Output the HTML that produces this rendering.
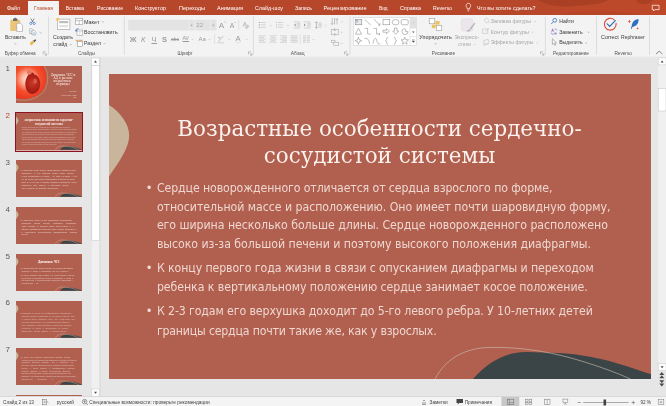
<!DOCTYPE html>
<html lang="ru"><head><meta charset="utf-8"><title>PowerPoint</title>
<style>
*{box-sizing:border-box;margin:0;padding:0}
html,body{width:666px;height:406px;overflow:hidden;background:#e6e6e6;font-family:"Liberation Sans",sans-serif}
#app{will-change:transform;position:relative;width:666px;height:406px;overflow:hidden;background:#e6e6e6}
.x{position:absolute;white-space:nowrap;line-height:7px;height:7px;font-family:"Liberation Sans",sans-serif}
svg{position:absolute;left:0;top:0;overflow:visible}
#tabs{position:absolute;left:0;top:0;width:666px;height:14.6px;background:#b7472a;overflow:hidden}
#tabs .act{position:absolute;background:#f3f3f3;top:1.2px;left:28px;width:31.3px;height:14px}
#ribbon{position:absolute;left:0;top:14.6px;width:666px;height:42px;background:#f3f3f3}
#ribline{position:absolute;left:0;top:56.2px;width:666px;height:1.4px;background:linear-gradient(#f0f0f0,#e8e8e8)}
#panel{position:absolute;left:0;top:57.6px;width:100px;height:339.4px;overflow:hidden}
.th{position:absolute;left:16.4px;width:65.5px;height:37px;background:#b15f4e;overflow:hidden}
.ts{position:absolute;left:0;top:0;width:542.7px;height:305px;transform:scale(0.12069);transform-origin:0 0}
.ts p{position:absolute;white-space:nowrap;color:#fff6f2;font-family:'DejaVu Sans',sans-serif}
.ts svg{position:absolute;left:0;top:0}
#slide{position:absolute;left:108.5px;top:73.8px;width:542.6px;height:305px;background:#b15f4e;overflow:hidden}
#slide .ttl{position:absolute;left:-0.3px;width:100%;text-align:center;font-family:"DejaVu Serif","Liberation Serif",serif;color:#fbf2ee;font-size:21.45px;line-height:27px;white-space:nowrap}
#slide .b{position:absolute;left:48.4px;transform:scaleY(1.05);transform-origin:0 10.8px;font-family:"DejaVu Sans","Liberation Sans",sans-serif;font-size:11px;letter-spacing:-0.1px;line-height:14px;color:#eed7d0;white-space:nowrap}
#slide .dot{position:absolute;left:37.3px;font-family:"DejaVu Sans","Liberation Sans",sans-serif;font-size:11.5px;line-height:14px;color:#f1dcd5}
#status{position:absolute;left:0;top:396px;width:666px;height:10px;background:#f4f4f4;border-top:0.8px solid #d9d9d9}
</style></head><body>
<div id="app">
<div id="tabs">
<svg width="666" height="15" viewBox="0 0 666 15">
<defs><linearGradient id="tg" x1="0" x2="1" y1="0" y2="0"><stop offset="0" stop-color="#c04a2a" stop-opacity="0"/><stop offset=".35" stop-color="#c04a2a" stop-opacity=".6"/><stop offset="1" stop-color="#c04a2a" stop-opacity=".7"/></linearGradient></defs><rect x="530" y="0" width="136" height="15" fill="url(#tg)"/><path d="M538 0 C545 5 560 7.500 575 6 C590 4.500 600 5 608 0Z" fill="#a63e23" opacity=".85"/><path d="M636 0 C639 5 648 6.500 653 0Z" fill="#a63e23" opacity=".8"/><path d="M560 15 C580 9 610 9 640 15Z" fill="#b34426" opacity=".6"/>
<g fill="none" stroke="#fff" stroke-width=".7">
<path d="M466.3 6.6a2.3 2.3 0 1 1 4.2 0c-.5.8-.9 1.3-.9 2.2h-2.4c0-.9-.4-1.4-.9-2.2z"/>
<path d="M467.4 10h2M467.7 11h1.4" stroke-width=".6"/>
<path d="M652.3 5.3h6.8v4.3h-4.2l-1.3 1.4v-1.4h-1.3z"/>
</g>
</svg>
<div class="act"></div>
</div>
<div id="ribbon"></div><div id="ribline"></div>
<svg id="ribsvg" width="666" height="60" viewBox="0 0 666 60">
<path d="M48.5 16.7V54.6" stroke="#d6d6d6" stroke-width=".8"/>
<path d="M124.3 16.7V54.6" stroke="#d6d6d6" stroke-width=".8"/>
<path d="M253.4 16.7V54.6" stroke="#d6d6d6" stroke-width=".8"/>
<path d="M350 16.7V54.6" stroke="#d6d6d6" stroke-width=".8"/>
<path d="M545.4 16.7V54.6" stroke="#d6d6d6" stroke-width=".8"/>
<path d="M596.5 16.7V54.6" stroke="#d6d6d6" stroke-width=".8"/>
<path d="M649.5 16.7V54.6" stroke="#d6d6d6" stroke-width=".8"/>
<path d="M238.6 20V30" stroke="#dadada" stroke-width=".7"/>
<path d="M214.6 34V44" stroke="#dadada" stroke-width=".7"/>
<path d="M300.3 34V44" stroke="#dadada" stroke-width=".7"/>
<path d="M43.2 54.4v-2.6h2.6M44.5 53.099999999999994l2 2M46.6 53.4v1.8h-1.8" fill="none" stroke="#8a8a8a" stroke-width=".5"/>
<path d="M248.5 54.4v-2.6h2.6M249.8 53.099999999999994l2 2M251.9 53.4v1.8h-1.8" fill="none" stroke="#8a8a8a" stroke-width=".5"/>
<path d="M344.5 54.4v-2.6h2.6M345.8 53.099999999999994l2 2M347.9 53.4v1.8h-1.8" fill="none" stroke="#8a8a8a" stroke-width=".5"/>
<path d="M540.5 54.4v-2.6h2.6M541.8 53.099999999999994l2 2M543.9 53.4v1.8h-1.8" fill="none" stroke="#8a8a8a" stroke-width=".5"/>
<path d="M14.40 43.30l0.9 0.9l0.9 -0.9" fill="none" stroke="#858585" stroke-width=".55"/>
<path d="M39.60 32.30l0.9 0.9l0.9 -0.9" fill="none" stroke="#858585" stroke-width=".55"/>
<path d="M69.90 44.20l0.9 0.9l0.9 -0.9" fill="none" stroke="#858585" stroke-width=".55"/>
<path d="M102.10 21.40l0.9 0.9l0.9 -0.9" fill="none" stroke="#858585" stroke-width=".55"/>
<path d="M103.60 43.10l0.9 0.9l0.9 -0.9" fill="none" stroke="#858585" stroke-width=".55"/>
<path d="M434.80 43.30l0.9 0.9l0.9 -0.9" fill="none" stroke="#858585" stroke-width=".55"/>
<path d="M587.70 31.70l0.9 0.9l0.9 -0.9" fill="none" stroke="#858585" stroke-width=".55"/>
<path d="M585.30 42.50l0.9 0.9l0.9 -0.9" fill="none" stroke="#858585" stroke-width=".55"/>
<path d="M190.60 25.00l0.9 0.9l0.9 -0.9" fill="none" stroke="#b8b8b8" stroke-width=".55"/>
<path d="M212.10 25.00l0.9 0.9l0.9 -0.9" fill="none" stroke="#b8b8b8" stroke-width=".55"/>
<path d="M191.50 38.90l0.9 0.9l0.9 -0.9" fill="none" stroke="#b8b8b8" stroke-width=".55"/>
<path d="M208.60 38.90l0.9 0.9l0.9 -0.9" fill="none" stroke="#b8b8b8" stroke-width=".55"/>
<path d="M228.60 38.90l0.9 0.9l0.9 -0.9" fill="none" stroke="#b8b8b8" stroke-width=".55"/>
<path d="M245.60 38.90l0.9 0.9l0.9 -0.9" fill="none" stroke="#b8b8b8" stroke-width=".55"/>
<path d="M269.90 25.00l0.9 0.9l0.9 -0.9" fill="none" stroke="#b8b8b8" stroke-width=".55"/>
<path d="M287.10 25.00l0.9 0.9l0.9 -0.9" fill="none" stroke="#b8b8b8" stroke-width=".55"/>
<path d="M324.70 25.00l0.9 0.9l0.9 -0.9" fill="none" stroke="#b8b8b8" stroke-width=".55"/>
<path d="M312.70 39.20l0.9 0.9l0.9 -0.9" fill="none" stroke="#b8b8b8" stroke-width=".55"/>
<path d="M340.90 21.30l0.9 0.9l0.9 -0.9" fill="none" stroke="#b8b8b8" stroke-width=".55"/>
<path d="M340.90 31.80l0.9 0.9l0.9 -0.9" fill="none" stroke="#b8b8b8" stroke-width=".55"/>
<path d="M340.90 43.10l0.9 0.9l0.9 -0.9" fill="none" stroke="#b8b8b8" stroke-width=".55"/>
<path d="M473.60 44.20l0.9 0.9l0.9 -0.9" fill="none" stroke="#b8b8b8" stroke-width=".55"/>
<path d="M534.00 21.20l0.9 0.9l0.9 -0.9" fill="none" stroke="#b8b8b8" stroke-width=".55"/>
<path d="M531.60 31.70l0.9 0.9l0.9 -0.9" fill="none" stroke="#b8b8b8" stroke-width=".55"/>
<path d="M536.40 42.50l0.9 0.9l0.9 -0.9" fill="none" stroke="#b8b8b8" stroke-width=".55"/>
<g><rect x="10.2" y="19.8" width="10" height="11.2" rx=".6" fill="#eac67c"/><rect x="13" y="18.4" width="4.4" height="2.6" rx=".5" fill="#6b6b6b"/><rect x="14.2" y="17.8" width="2" height="1.4" rx=".6" fill="#6b6b6b"/><path d="M16.7 23.3h3.8l2 2v6.2h-5.8z" fill="#fff" stroke="#8a8a8a" stroke-width=".5"/></g>
<g fill="none"><path d="M30.8 18.6l2.6 4M34.2 18.6l-2.6 4" stroke="#5a5a5a" stroke-width=".7"/><circle cx="30.8" cy="23.4" r="1.1" stroke="#3a78c3" stroke-width=".7"/><circle cx="34.2" cy="23.4" r="1.1" stroke="#3a78c3" stroke-width=".7"/></g>
<g fill="#fff" stroke="#8a8a8a" stroke-width=".5"><path d="M29.7 28.8h2.6l1.2 1.2v3.6h-3.8z"/><path d="M32 30.6h2.6l1.3 1.3v3h-3.9z"/><path d="M30.6 31h1.6M30.6 32.2h1.2M33 32.8h1.8M33 33.9h1.8" stroke="#4a86d0" stroke-width=".45"/></g>
<g><path d="M29.6 43.2l3-2.6 1.8 2-3 2.8z" fill="#e9b94e"/><path d="M33 40.8l2.4-1.6 .9 1-1.9 2z" fill="#555"/></g>
<g><rect x="57.5" y="19.1" width="12.4" height="10.3" fill="#fff" stroke="#9a9a9a" stroke-width=".6"/><rect x="59.2" y="21" width="9" height="2.2" fill="#bdbdbd"/><rect x="59.2" y="25" width="9" height="2.2" fill="#e2e2e2"/><path d="M57.6 17.200l.4 1.200 1.200-.5-.5 1.200 1.200.4-1.200.4.5 1.200-1.200-.5-.4 1.200-.4-1.200-1.200.5.5-1.200-1.200-.4 1.200-.4-.5-1.200 1.200.5z" fill="#f4c55c"/></g>
<g fill="none" stroke="#8a8a8a" stroke-width=".5"><rect x="75.6" y="18.7" width="7.2" height="5.8" fill="#fff"/><path d="M75.6 20.6h7.2M79.2 20.6v3.9"/></g>
<g fill="none"><rect x="77" y="30" width="5.8" height="5.2" fill="#fff" stroke="#8a8a8a" stroke-width=".5"/><path d="M77 31.6h5.8M79.8 31.6v3.6" stroke="#aaa" stroke-width=".4"/><path d="M76 31.2c-.4-1.6.8-2.8 2.6-2.4" stroke="#2f6fc0" stroke-width=".8"/><path d="M75 30.2l1 1.6 1.4-1.2z" fill="#2f6fc0"/></g>
<g><rect x="77.2" y="41.6" width="5.4" height="5" fill="#fff" stroke="#7a7a7a" stroke-width=".5"/><path d="M75.6 39.8h2.4v1.2h-2.4zM78.6 39.8h4v1.2h-4z" fill="#f0a868"/></g>
<rect x="128.2" y="19.8" width="66.4" height="10.8" rx=".8" fill="#e3e3e3"/>
<path d="M188.9 19.8v10.8" stroke="#f0f0f0" stroke-width=".6"/>
<rect x="195.3" y="19.8" width="21.2" height="10.8" rx=".8" fill="#e3e3e3"/>
<path d="M210.4 19.8v10.8" stroke="#f0f0f0" stroke-width=".6"/>
<path d="M190.500 24.800h2.200l-1.100 1.300zM212.200 24.800h2.200l-1.100 1.300z" fill="#8c8c8c"/>
<path d="M224.2 22.6l.9-.9.9.9" fill="none" stroke="#999" stroke-width=".5"/>
<path d="M234.4 22.2l.8.8.8-.8" fill="none" stroke="#999" stroke-width=".5"/>
<g fill="none" stroke="#a5a5a5" stroke-width=".6"><path d="M243 26.6l1.8-4.6 1.6 3.6M243.8 25h2.2"/><path d="M245.2 27.6l2.4-2.6 1.4 1.2-2.4 2.6z" fill="#cfcfcf" stroke-width=".4"/></g>
<g fill="none" stroke="#a5a5a5" stroke-width=".6"><path d="M218.4 41.6l5-5.6M217.8 37.4h2.4l-1.2 1.6"/><path d="M217.4 42.8h6.8" stroke="#d8c7dd" stroke-width=".9"/></g>
<path d="M235.4 42.6h5.6" stroke="#dedede" stroke-width=".7"/>
<g fill="#8f8f8f"><rect x="258.8" y="22" width="1" height="1"/><rect x="258.8" y="24.4" width="1" height="1"/><rect x="258.8" y="26.8" width="1" height="1"/></g>
<path d="M260.6 22.5h5.2M260.6 24.9h5.2M260.6 27.3h5.2" stroke="#bababa" stroke-width="0.55" fill="none"/>
<g fill="#c4c4c4"><rect x="276" y="21.8" width=".8" height="1.4"/><rect x="276" y="24.2" width=".8" height="1.4"/><rect x="276" y="26.6" width=".8" height="1.4"/></g>
<path d="M277.8 22.5h5.2M277.8 24.9h5.2M277.8 27.3h5.2" stroke="#bababa" stroke-width="0.55" fill="none"/>
<path d="M293.7 21.9h6.6" stroke="#bababa" stroke-width="0.55" fill="none"/>
<path d="M296.6 23.6h3.7M296.6 24.9h3.7M296.6 26.2h3.7" stroke="#bababa" stroke-width="0.55" fill="none"/>
<path d="M293.7 28.0h6.6" stroke="#bababa" stroke-width="0.55" fill="none"/>
<path d="M295.6 23.6l-1.6 1.4 1.6 1.4z" fill="#8f8f8f"/>
<path d="M303.8 21.9h7" stroke="#bababa" stroke-width="0.55" fill="none"/>
<path d="M307.0 23.6h3.8M307.0 24.9h3.8M307.0 26.2h3.8" stroke="#bababa" stroke-width="0.55" fill="none"/>
<path d="M303.8 28.0h7" stroke="#bababa" stroke-width="0.55" fill="none"/>
<path d="M304 23.6l1.6 1.4-1.6 1.4z" fill="#8f8f8f"/>
<path d="M316.4 21.8v6.4M315.2 23l1.2-1.3 1.2 1.3M315.2 27l1.2 1.3 1.2-1.3" fill="none" stroke="#8f8f8f" stroke-width=".55"/>
<path d="M318.4 23.0h3.4M318.4 24.4h3.4M318.4 25.7h3.4M318.4 27.1h3.4" stroke="#bababa" stroke-width="0.55" fill="none"/>
<path d="M258.8 35.8h7M258.8 37.4h5M258.8 39.0h7M258.8 40.6h5M258.8 42.2h7" stroke="#bababa" stroke-width="0.55" fill="none"/>
<path d="M269.6 35.8h7M270.8 37.4h4.6M269.6 39.0h7M270.8 40.6h4.6M269.6 42.2h7" stroke="#bababa" stroke-width="0.55" fill="none"/>
<path d="M280.0 35.8h7M282.0 37.4h5M280.0 39.0h7M282.0 40.6h5M280.0 42.2h7" stroke="#bababa" stroke-width="0.55" fill="none"/>
<path d="M290.6 35.8h7M290.6 37.4h7M290.6 39.0h7M290.6 40.6h7M290.6 42.2h7" stroke="#bababa" stroke-width="0.55" fill="none"/>
<path d="M303.0 35.8h3M303.0 37.4h3M303.0 39.0h3M303.0 40.6h3M303.0 42.2h3" stroke="#bababa" stroke-width="0.55" fill="none"/>
<path d="M306.9 35.8h3M306.9 37.4h3M306.9 39.0h3M306.9 40.6h3M306.9 42.2h3" stroke="#bababa" stroke-width="0.55" fill="none"/>
<path d="M332.2 18v6.4M334.6 18v6.4M337 19v5.4M335.8 20l1.2-1.6 1.2 1.6M331 23.2l1.2 1.4 1.2-1.4" fill="none" stroke="#8f8f8f" stroke-width=".5"/>
<g fill="none" stroke="#a0a0a0" stroke-width=".5"><rect x="331.2" y="29.4" width="7" height="5.4"/><path d="M334.7 28v2.8M333.8 30l.9 1 .9-1M334.7 36.2v-2.8M333.8 34.2l.9-1 .9 1"/></g>
<g fill="none" stroke="#a0a0a0" stroke-width=".5"><rect x="331.4" y="40.2" width="3.6" height="2.4"/><rect x="333.8" y="42.2" width="5" height="3.4" fill="#f3f3f3"/></g>
<rect x="353.4" y="17.4" width="63.1" height="28.2" fill="#fff" stroke="#d2d2d2" stroke-width=".6"/>
<rect x="410.2" y="17.7" width="6" height="10.2" fill="#e1e1e1"/>
<path d="M410 17.4v28.2M410 28h6.5M410 36.6h6.5" stroke="#d2d2d2" stroke-width=".5" fill="none"/>
<path d="M412.3 22.6h1.8" stroke="#bdbdbd" stroke-width=".5"/>
<path d="M412 31.6h2.6l-1.3 1.5z" fill="#555"/>
<path d="M412 40.9h2.6l-1.3 1.5zM412 39.8h2.6" fill="#555" stroke="#555" stroke-width=".4"/>
<g fill="none" stroke="#7c7c7c" stroke-width=".5"><rect x="355.2" y="19.4" width="6.6" height="5.4" fill="#e9e9e9"/><path d="M356.2 20.6h1.6M357 20.6v2" stroke="#2f6fc0"/><path d="M364.6 19.2l6.2 6"/><path d="M373.8 19.2l6.2 6M380 23.2v2h-2" /><rect x="383" y="19.6" width="6.8" height="5.2"/><ellipse cx="395.6" cy="22.2" rx="3.5" ry="2.7"/><rect x="401.2" y="19.6" width="7" height="5.2" rx="1.4"/><path d="M358.5 28.2l3 6h-6z"/><path d="M364.6 28.4h3v5.6h3.2"/><path d="M373.6 28.4h3v5.6h3.2M378.8 32.8l1.2 1.2-1.2 1.2"/><path d="M383 30.2h3.4v-1.6l3 2.6-3 2.6v-1.6H383z"/><path d="M394.4 28h2.6v3.2h1.6l-2.9 3-2.9-3h1.6z"/><path d="M404.6 28.6a3 3 0 1 0 3.4 3h-2.4v-2.4a3 3 0 0 0-1-.6z"/><path d="M358.4 37.2l.9 2.6 2.4.9-2.4.9-.9 2.8-.9-2.8-2.4-.9 2.4-.9z"/><path d="M364.4 38.4c3.4-.4 4.6 1.4 5.2 5.4"/><path d="M373 43.6c1.2-6.6 3.2-6.6 4-2.4.6 3.2 2 3 3.200 2.400"/><path d="M388.200 37.400c-1.500 0-1.500.6-1.500 1.600s-.3 1.500-1.200 1.800c.9.300 1.200.800 1.200 1.800s0 1.600 1.500 1.600"/><path d="M393.800 37.400c1.500 0 1.500.6 1.500 1.600s.3 1.500 1.200 1.800c-.9.300-1.200.800-1.200 1.800s0 1.600-1.500 1.600"/><path d="M404.800 37.200l1 2.500 2.700.2-2.100 1.700.7 2.600-2.300-1.400-2.300 1.400.7-2.600-2.100-1.700 2.700-.2z"/></g>
<g stroke-width=".5"><rect x="435.400" y="21" width="4.200" height="3.600" fill="#f0c25e"/><rect x="431.800" y="24.600" width="3.800" height="3.500" fill="#f0c25e"/><rect x="429.200" y="18.400" width="5.600" height="5.400" fill="#fff" stroke="#8a8a8a"/><rect x="436.200" y="25.300" width="5.600" height="5.400" fill="#fff" stroke="#8a8a8a"/></g>
<g><rect x="461.300" y="18.700" width="11.400" height="12.400" rx="1.800" fill="#ece6ec" stroke="#e0d8e0" stroke-width=".5"/><path d="M474.600 22.600l-5.200 6.200 1.400 1.200 4.600-6.600z" fill="#b9b9b9"/><path d="M469 29.400c-1.200.2-1.600 1.400-2.600 2 1.600.4 3.400 0 4-1z" fill="#b0b0b0"/></g>
<g fill="none" stroke="#bdbdbd" stroke-width=".55"><path d="M484 20l2.600-2.200 2.400 2.800-2.800 2.400zM488.800 21.400c.6.800.8 1.400.2 1.800"/><path d="M482.600 29h5.200v4.400h-5.200zM485.600 31.800l3.400-3.800"/><path d="M483.400 40.800l4.600-1.600 1 3.600-4.800 1.600zM483.200 44.400l.8.800 5-1.600"/></g>
<g fill="none" stroke="#356fc4" stroke-width=".8"><circle cx="554.800" cy="20.300" r="1.900"/><path d="M553.400 21.800l-2.300 2.300"/></g>
<g><path d="M551.800 30.400h1.600M552.600 28.800l1 3.400M552.600 28.800l-1 3.400" stroke="#8a4fb0" stroke-width=".5" fill="none"/><path d="M554.600 29.200c1.200-.4 2 .2 2.200 1.200M553.800 34.200c-1.600.2-2.600-.4-2.800-1.400" stroke="#356fc4" stroke-width=".6" fill="none"/><path d="M554.400 32.600h2.200v1.800h-2.200z" fill="#8a4fb0" opacity=".7"/></g>
<path d="M552.400 38.800v5.600l1.400-1.200 1 2.200.9-.4-1-2.200h1.800z" fill="#fff" stroke="#777" stroke-width=".5"/>
<g fill="none" stroke-linecap="round"><path d="M614.200 19.800a5.900 5.900 0 1 0 1.900 3.600" stroke="#dc452c" stroke-width="1.100"/><path d="M607.200 23.800l2.500 2.600 5.600-5.700" stroke="#2b6cb8" stroke-width="1.200"/></g>
<g><path d="M638.700 19.300c-3.600-.2-6.600 2.400-7 6.800l-.9 2.600.8.200.9-2c3.800-.4 6-3.400 6.200-7.600z" fill="#2f6fc0"/><path d="M629.400 19.600l.5 1.300 1.300.5-1.300.5-.5 1.300-.5-1.300-1.300-.5 1.300-.5z" fill="#dc452c"/><path d="M637.600 27l.4 1 1 .4-1 .4-.4 1-.4-1-1-.4 1-.4z" fill="#dc452c"/></g>
<path d="M656 54l3.200-2.800 3.200 2.800" fill="none" stroke="#555" stroke-width=".7"/>
</svg>
<div id="panel"></div>
<div class="th" style="top:66.2px;"><svg width="65.5" height="37" viewBox="0 0 65.3 36.8" preserveAspectRatio="none"><defs><radialGradient id="hg" cx="11.500" cy="13" r="20" gradientUnits="userSpaceOnUse"><stop offset="0" stop-color="#ffe9dd"/><stop offset=".3" stop-color="#fcb199"/><stop offset=".62" stop-color="#f4512f"/><stop offset="1" stop-color="#ea371e"/></radialGradient><radialGradient id="hh" cx="18" cy="17" r="9" gradientUnits="userSpaceOnUse"><stop offset="0" stop-color="#c93a28"/><stop offset=".7" stop-color="#b0241a"/><stop offset="1" stop-color="#a51d15"/></radialGradient><filter id="bl" x="-20%" y="-20%" width="140%" height="140%"><feGaussianBlur stdDeviation=".7"/></filter></defs><path d="M0 0H26.500 C31.200 6 31.200 16.500 26.600 23.800 C21.500 31.300 9 34.200 0 31.800Z" fill="url(#hg)"/><g filter="url(#bl)" transform="translate(-1.300 0)"><path d="M13.500 9 C15 5.500 18.500 5.500 19.500 8.500 C24 9.500 26.500 15 25 21 C23.500 27 18 29.500 14 26.500 C9.500 23 9.500 14 13.500 9Z" fill="url(#hh)"/><path d="M12.500 4.500 C14 3 16.500 3.500 17 6 C17.500 8 15 9.500 13.500 8.500 C12 7.500 11.500 5.500 12.500 4.500Z" fill="#e8785f"/><path d="M19 13 C21 12 23 14 22 16.500 C21 18.500 18.500 17.500 18.500 15.500Z" fill="#d95a44"/></g><path d="M28 0 C32.900 6.500 32.900 17 27.900 24.800 C22.500 32.800 9.500 35.800 0 33.300" fill="none" stroke="#dca97a" stroke-width=".5"/></svg><div class="ts"><p style="left:288.3px;top:62.8px;width:203.8px;font-size:22.39px;line-height:26.9px;opacity:0.95;font-weight:400;font-family:'DejaVu Serif',sans-serif;text-align:justify;text-align-last:justify;">Динамика ЧСС и</p><p style="left:311.5px;top:86.9px;width:157.4px;font-size:23.59px;line-height:28.3px;opacity:0.95;font-weight:400;font-family:'DejaVu Serif',sans-serif;text-align:justify;text-align-last:justify;">АД в разные</p><p style="left:311.5px;top:109.9px;width:157.4px;font-size:24px;line-height:28.8px;opacity:0.95;font-weight:400;font-family:'DejaVu Serif',sans-serif;text-align:justify;text-align-last:justify;">возрастные</p><p style="left:334.3px;top:134.7px;width:111.9px;font-size:24px;line-height:28.8px;opacity:0.95;font-weight:400;font-family:'DejaVu Serif',sans-serif;text-align:justify;text-align-last:justify;">периоды</p><p style="left:444.1px;top:210.0px;width:58.0px;font-size:9px;line-height:10.8px;opacity:0.75;font-weight:400;font-family:'DejaVu Sans',sans-serif;text-align:justify;text-align-last:justify;">Выполнили:</p><p style="left:377.8px;top:236.9px;width:124.3px;font-size:8.33px;line-height:10.0px;opacity:0.75;font-weight:400;font-family:'DejaVu Sans',sans-serif;text-align:justify;text-align-last:justify;">студенты 2 курса, 4 группы</p><p style="left:475.6px;top:258.1px;width:26.5px;font-size:9px;line-height:10.8px;opacity:0.75;font-weight:400;font-family:'DejaVu Sans',sans-serif;text-align:justify;text-align-last:justify;">2023</p></div></div>
<div style="position:absolute;left:15px;top:111.900px;width:68.150px;height:40px;background:#dcb3a9;border:1.250px solid #8a1424"></div>
<div class="th" style="top:113.4px;left:16.320px"><div class="ts"><svg width="543" height="305" viewBox="0 0 543 305"><path d="M0 31 C11 38 20.5 50 20.2 62 C20 74 10 88 0 102.5Z" fill="#c8b59b"/><path d="M364 305 C380 286 400 277.5 418 278 C440 278.5 458 279 470 281 C500 285 522 294 543 300.5 L543 305Z" fill="#3b4446"/><path d="M326 305 C336 286 354 274 381 273.4 C410 273 436 277 462 284 C490 292 508 299 521.5 305" fill="none" stroke="#d9cdbf" stroke-width="3"/></svg><p style="left:0;top:49px;width:542.700px;text-align:center;font-family:'DejaVu Serif',serif;font-size:21.400px;letter-spacing:-1.400px;line-height:27px;font-weight:700;opacity:.9">Возрастные особенности сердечно-</p><p style="left:0;top:77px;width:542.700px;text-align:center;font-family:'DejaVu Serif',serif;font-size:21.400px;letter-spacing:-1.400px;line-height:27px;font-weight:700;opacity:.9">сосудистой системы</p><p style="left:49px;top:115.1px;width:395.7px;font-size:11px;line-height:14px;text-align:justify;text-align-last:justify;opacity:.6"><b style="position:absolute;left:-10px;font-weight:400">•</b>Сердце новорожденного отличается от сердца взрослого по форме,</p><p style="left:49px;top:134.0px;width:451.7px;font-size:11px;line-height:14px;text-align:justify;text-align-last:justify;opacity:.6">относительной массе и расположению. Оно имеет почти шаровидную форму,</p><p style="left:49px;top:152.6px;width:449.7px;font-size:11px;line-height:14px;text-align:justify;text-align-last:justify;opacity:.6">его ширина несколько больше длины. Сердце новорожденного расположено</p><p style="left:49px;top:171.0px;width:433.7px;font-size:11px;line-height:14px;text-align:justify;text-align-last:justify;opacity:.6">высоко из-за большой печени и поэтому высокого положения диафрагмы.</p><p style="left:49px;top:195.6px;width:436.7px;font-size:11px;line-height:14px;text-align:justify;text-align-last:justify;opacity:.6"><b style="position:absolute;left:-10px;font-weight:400">•</b>К концу первого года жизни в связи с опусканием диафрагмы и переходом</p><p style="left:49px;top:214.4px;width:430.7px;font-size:11px;line-height:14px;text-align:justify;text-align-last:justify;opacity:.6">ребенка к вертикальному положению сердце занимает косое положение.</p><p style="left:49px;top:238.4px;width:436.7px;font-size:11px;line-height:14px;text-align:justify;text-align-last:justify;opacity:.6"><b style="position:absolute;left:-10px;font-weight:400">•</b>К 2-3 годам его верхушка доходит до 5-го левого ребра. У 10-летних детей</p><p style="left:49px;top:257.9px;width:279.7px;font-size:11px;line-height:14px;text-align:justify;text-align-last:justify;opacity:.6">границы сердца почти такие же, как у взрослых.</p></div></div>
<div class="th" style="top:160.1px;"><div class="ts"><svg width="543" height="305" viewBox="0 0 543 305"><path d="M0 31 C11 38 20.5 50 20.2 62 C20 74 10 88 0 102.5Z" fill="#c8b59b"/><path d="M364 305 C380 286 400 277.5 418 278 C440 278.5 458 279 470 281 C500 285 522 294 543 300.5 L543 305Z" fill="#3b4446"/><path d="M326 305 C336 286 354 274 381 273.4 C410 273 436 277 462 284 C490 292 508 299 521.5 305" fill="none" stroke="#d9cdbf" stroke-width="3"/></svg><p style="left:45.6px;top:81.9px;width:451.6px;font-size:14px;line-height:16.8px;opacity:0.78;font-weight:400;font-family:'DejaVu Sans',sans-serif;text-align:justify;text-align-last:justify;"><b style="position:absolute;left:-9px;font-weight:400">•</b>С возрастом масса сердца увеличивается, особенно масса</p><p style="left:45.6px;top:106.1px;width:430.8px;font-size:14px;line-height:16.8px;opacity:0.78;font-weight:400;font-family:'DejaVu Sans',sans-serif;text-align:justify;text-align-last:justify;">желудочка. К 2-м месяцам жизни масса сердца</p><p style="left:45.6px;top:130.3px;width:459.8px;font-size:14px;line-height:16.8px;opacity:0.78;font-weight:400;font-family:'DejaVu Sans',sans-serif;text-align:justify;text-align-last:justify;">к году утраивается, к 5 годам — в 4 раза, к 6 годам — в 11</p><p style="left:45.6px;top:154.5px;width:441.6px;font-size:14px;line-height:16.8px;opacity:0.78;font-weight:400;font-family:'DejaVu Sans',sans-serif;text-align:justify;text-align-last:justify;">С 7 до 12 лет рост сердца замедляется и отстает от роста</p><p style="left:45.6px;top:178.7px;width:455.7px;font-size:14px;line-height:16.8px;opacity:0.78;font-weight:400;font-family:'DejaVu Sans',sans-serif;text-align:justify;text-align-last:justify;">тела. В 14–15 лет, в период полового созревания, снова</p><p style="left:45.6px;top:202.9px;width:389.4px;font-size:14px;line-height:16.8px;opacity:0.78;font-weight:400;font-family:'DejaVu Sans',sans-serif;text-align:justify;text-align-last:justify;">усиленный рост сердца. У мальчиков сердце</p><p style="left:45.6px;top:227.1px;width:304.1px;font-size:14px;line-height:16.8px;opacity:0.78;font-weight:400;font-family:'DejaVu Sans',sans-serif;text-align:justify;text-align-last:justify;">чем у девочек, до периода созревания.</p></div></div>
<div class="th" style="top:207.05px;"><div class="ts"><svg width="543" height="305" viewBox="0 0 543 305"><path d="M0 31 C11 38 20.5 50 20.2 62 C20 74 10 88 0 102.5Z" fill="#c8b59b"/><path d="M364 305 C380 286 400 277.5 418 278 C440 278.5 458 279 470 281 C500 285 522 294 543 300.5 L543 305Z" fill="#3b4446"/><path d="M326 305 C336 286 354 274 381 273.4 C410 273 436 277 462 284 C490 292 508 299 521.5 305" fill="none" stroke="#d9cdbf" stroke-width="3"/></svg><p style="left:45.6px;top:103.0px;width:415.9px;font-size:14px;line-height:16.8px;opacity:0.78;font-weight:400;font-family:'DejaVu Sans',sans-serif;text-align:justify;text-align-last:justify;"><b style="position:absolute;left:-9px;font-weight:400">•</b>С возрастом, после 10 лет, происходит интенсивный</p><p style="left:45.6px;top:127.1px;width:451.6px;font-size:14px;line-height:16.8px;opacity:0.78;font-weight:400;font-family:'DejaVu Sans',sans-serif;text-align:justify;text-align-last:justify;">элементов стенки сердца; капилляры становятся</p><p style="left:45.6px;top:151.1px;width:430.8px;font-size:14px;line-height:16.8px;opacity:0.78;font-weight:400;font-family:'DejaVu Sans',sans-serif;text-align:justify;text-align-last:justify;">число сосудов на единицу массы уменьшается. К 7</p><p style="left:45.6px;top:175.1px;width:455.7px;font-size:14px;line-height:16.8px;opacity:0.78;font-weight:400;font-family:'DejaVu Sans',sans-serif;text-align:justify;text-align-last:justify;">ребенка приобретает основные черты сердца взрослого. К</p><p style="left:45.6px;top:199.2px;width:459.8px;font-size:14px;line-height:16.8px;opacity:0.78;font-weight:400;font-family:'DejaVu Sans',sans-serif;text-align:justify;text-align-last:justify;">у подростков заканчивается формирование нервной</p><p style="left:45.6px;top:223.2px;width:52.2px;font-size:14px;line-height:16.8px;opacity:0.78;font-weight:400;font-family:'DejaVu Sans',sans-serif;text-align:justify;text-align-last:justify;">мышцы.</p></div></div>
<div class="th" style="top:254.0px;"><div class="ts"><svg width="543" height="305" viewBox="0 0 543 305"><path d="M0 31 C11 38 20.5 50 20.2 62 C20 74 10 88 0 102.5Z" fill="#c8b59b"/><path d="M364 305 C380 286 400 277.5 418 278 C440 278.5 458 279 470 281 C500 285 522 294 543 300.5 L543 305Z" fill="#3b4446"/><path d="M326 305 C336 286 354 274 381 273.4 C410 273 436 277 462 284 C490 292 508 299 521.5 305" fill="none" stroke="#d9cdbf" stroke-width="3"/></svg><p style="left:183.9px;top:53.1px;width:176.5px;font-size:20.67px;line-height:24.8px;opacity:0.95;font-weight:700;font-family:'DejaVu Sans',sans-serif;text-align:justify;text-align-last:justify;">Динамика ЧСС</p><p style="left:45.6px;top:110.4px;width:426.7px;font-size:13.5px;line-height:16.2px;opacity:0.72;font-weight:400;font-family:'DejaVu Sans',sans-serif;text-align:justify;text-align-last:justify;"><b style="position:absolute;left:-9px;font-weight:400">•</b>У новорожденного частота сердечных сокращений близка</p><p style="left:45.6px;top:136.1px;width:389.4px;font-size:13.5px;line-height:16.2px;opacity:0.72;font-weight:400;font-family:'DejaVu Sans',sans-serif;text-align:justify;text-align-last:justify;">величине у плода и составляет 120–140 ударов в</p><p style="left:45.6px;top:166.7px;width:436.6px;font-size:13.5px;line-height:16.2px;opacity:0.72;font-weight:400;font-family:'DejaVu Sans',sans-serif;text-align:justify;text-align-last:justify;"><b style="position:absolute;left:-9px;font-weight:400">•</b>К концу первого года жизни ЧСС уменьшается, причем</p><p style="left:45.6px;top:189.9px;width:426.7px;font-size:13.5px;line-height:16.2px;opacity:0.72;font-weight:400;font-family:'DejaVu Sans',sans-serif;text-align:justify;text-align-last:justify;">тенденция к замедлению пульса с возрастом: у детей 5</p><p style="left:45.6px;top:214.0px;width:430.8px;font-size:13.5px;line-height:16.2px;opacity:0.72;font-weight:400;font-family:'DejaVu Sans',sans-serif;text-align:justify;text-align-last:justify;">она равна 100, у дошкольников и младших школьников —</p><p style="left:45.6px;top:238.0px;width:140.9px;font-size:13.5px;line-height:16.2px;opacity:0.72;font-weight:400;font-family:'DejaVu Sans',sans-serif;text-align:justify;text-align-last:justify;">у подростков — 75.</p></div></div>
<div class="th" style="top:300.95px;"><div class="ts"><svg width="543" height="305" viewBox="0 0 543 305"><path d="M0 31 C11 38 20.5 50 20.2 62 C20 74 10 88 0 102.5Z" fill="#c8b59b"/><path d="M364 305 C380 286 400 277.5 418 278 C440 278.5 458 279 470 281 C500 285 522 294 543 300.5 L543 305Z" fill="#3b4446"/><path d="M326 305 C336 286 354 274 381 273.4 C410 273 436 277 462 284 C490 292 508 299 521.5 305" fill="none" stroke="#d9cdbf" stroke-width="3"/></svg><p style="left:45.6px;top:96.7px;width:411.0px;font-size:13.5px;line-height:16.2px;opacity:0.6;font-weight:400;font-family:'DejaVu Sans',sans-serif;text-align:justify;text-align-last:justify;"><b style="position:absolute;left:-9px;font-weight:400">•</b>В возрасте 14–15 лет ЧСС приближается к показателям</p><p style="left:45.6px;top:121.0px;width:436.6px;font-size:13.5px;line-height:16.2px;opacity:0.6;font-weight:400;font-family:'DejaVu Sans',sans-serif;text-align:justify;text-align-last:justify;">взрослых людей и составляет 70–78 ударов в минуту. При</p><p style="left:45.6px;top:145.3px;width:441.6px;font-size:13.5px;line-height:16.2px;opacity:0.6;font-weight:400;font-family:'DejaVu Sans',sans-serif;text-align:justify;text-align-last:justify;">у девочек пульс несколько чаще, чем у мальчиков. Под</p><p style="left:45.6px;top:169.5px;width:401.0px;font-size:13.5px;line-height:16.2px;opacity:0.6;font-weight:400;font-family:'DejaVu Sans',sans-serif;text-align:justify;text-align-last:justify;">внешних воздействий ЧСС у детей изменяется больше,</p><p style="left:45.6px;top:193.8px;width:433.3px;font-size:13.5px;line-height:16.2px;opacity:0.6;font-weight:400;font-family:'DejaVu Sans',sans-serif;text-align:justify;text-align-last:justify;">чем у взрослых: легко возникает дыхательная аритмия —</p><p style="left:45.6px;top:218.1px;width:390.2px;font-size:13.5px;line-height:16.2px;opacity:0.6;font-weight:400;font-family:'DejaVu Sans',sans-serif;text-align:justify;text-align-last:justify;">учащается на вдохе и замедляется на выдохе.</p><p style="left:45.6px;top:242.4px;width:375.3px;font-size:13.5px;line-height:16.2px;opacity:0.6;font-weight:400;font-family:'DejaVu Sans',sans-serif;text-align:justify;text-align-last:justify;">лабильность пульса связана с тонусом вагуса.</p></div></div>
<div class="th" style="top:347.9px;"><div class="ts"><svg width="543" height="305" viewBox="0 0 543 305"><path d="M0 31 C11 38 20.5 50 20.2 62 C20 74 10 88 0 102.5Z" fill="#c8b59b"/><path d="M364 305 C380 286 400 277.5 418 278 C440 278.5 458 279 470 281 C500 285 522 294 543 300.5 L543 305Z" fill="#3b4446"/><path d="M326 305 C336 286 354 274 381 273.4 C410 273 436 277 462 284 C490 292 508 299 521.5 305" fill="none" stroke="#d9cdbf" stroke-width="3"/></svg><p style="left:45.6px;top:69.3px;width:402.7px;font-size:13px;line-height:15.6px;opacity:0.66;font-weight:400;font-family:'DejaVu Sans',sans-serif;text-align:justify;text-align-last:justify;"><b style="position:absolute;left:-9px;font-weight:400">•</b>У детей под влиянием физической нагрузки, эмоций</p><p style="left:45.6px;top:92.0px;width:456.5px;font-size:13px;line-height:15.6px;opacity:0.66;font-weight:400;font-family:'DejaVu Sans',sans-serif;text-align:justify;text-align-last:justify;">частота сердечных сокращений возрастает значительно быстрее</p><p style="left:45.6px;top:114.8px;width:429.2px;font-size:13px;line-height:15.6px;opacity:0.66;font-weight:400;font-family:'DejaVu Sans',sans-serif;text-align:justify;text-align-last:justify;">достигает больших величин, чем у взрослых, что</p><p style="left:45.6px;top:137.6px;width:431.7px;font-size:13px;line-height:15.6px;opacity:0.66;font-weight:400;font-family:'DejaVu Sans',sans-serif;text-align:justify;text-align-last:justify;">меньшим ударным объемом сердца. Высокая частота ритма</p><p style="left:45.6px;top:160.4px;width:439.1px;font-size:13px;line-height:15.6px;opacity:0.66;font-weight:400;font-family:'DejaVu Sans',sans-serif;text-align:justify;text-align-last:justify;">сердца у детей связана с преобладанием влияния</p><p style="left:45.6px;top:183.2px;width:401.0px;font-size:13px;line-height:15.6px;opacity:0.66;font-weight:400;font-family:'DejaVu Sans',sans-serif;text-align:justify;text-align-last:justify;">нервной системы и более интенсивным обменом</p><p style="left:45.6px;top:206.0px;width:409.3px;font-size:13px;line-height:15.6px;opacity:0.66;font-weight:400;font-family:'DejaVu Sans',sans-serif;text-align:justify;text-align-last:justify;">Минутный объем крови у детей относительно больше, чем</p><p style="left:45.6px;top:228.8px;width:446.6px;font-size:13px;line-height:15.6px;opacity:0.66;font-weight:400;font-family:'DejaVu Sans',sans-serif;text-align:justify;text-align-last:justify;">взрослых, что обеспечивает потребности растущего организма</p><p style="left:45.6px;top:251.5px;width:260.2px;font-size:13px;line-height:15.6px;opacity:0.66;font-weight:400;font-family:'DejaVu Sans',sans-serif;text-align:justify;text-align-last:justify;">питательных веществах и</p></div></div>
<div class="th" style="top:394.850px;height:3px"></div>
<svg width="666" height="406" viewBox="0 0 666 406" style="pointer-events:none"><rect x="91.800" y="57.800" width="7.400" height="339" fill="#f0f0f0"/><rect x="91.800" y="58" width="7.400" height="7.200" fill="#fff" stroke="#c6c6c6" stroke-width=".5"/><path d="M94 62.600h3l-1.500-2z" fill="#444"/><rect x="91.800" y="65.400" width="7.400" height="175.300" fill="#fff" stroke="#c0c0c0" stroke-width=".5"/><rect x="91.800" y="389" width="7.400" height="7.600" fill="#fff" stroke="#c6c6c6" stroke-width=".5"/><path d="M94 391.800h3l-1.500 2z" fill="#444"/><rect x="99.700" y="57.600" width=".9" height="339.400" fill="#dadada"/><rect x="658.200" y="57.800" width="7.800" height="313" fill="#f0f0f0"/><rect x="658.200" y="57.900" width="7.800" height="7" fill="#fff" stroke="#c6c6c6" stroke-width=".5"/><path d="M660.600 62.400h3l-1.500-2z" fill="#444"/><rect x="658.200" y="88.400" width="7.800" height="22.600" fill="#fff" stroke="#c0c0c0" stroke-width=".5"/><rect x="658.200" y="363.500" width="7.800" height="7" fill="#fff" stroke="#c6c6c6" stroke-width=".5"/><path d="M660.600 366.200h3l-1.500 2z" fill="#444"/><path d="M659.300 375.100l2.500-3 2.500 3zM659.300 378.200l2.500-3 2.500 3z" fill="#4a4a4a"/><path d="M659.300 380.300l2.500 3 2.500-3zM659.300 383.400l2.500 3 2.500-3z" fill="#4a4a4a"/></svg>
<div id="slide">
<svg width="543" height="305" viewBox="0 0 543 305">
<path d="M0 31 C11 38 20.5 50 20.2 62 C20 74 10 88 0 102.5Z" fill="#c8b59b"/>
<path d="M364 305 C380 286 400 277.5 418 278 C440 278.5 458 279 470 281 C500 285 522 294 543 300.5 L543 305Z" fill="#3b4446"/>
<path d="M326 305 C336 286 354 274 381 273.4 C410 273 436 277 462 284 C490 292 508 299 521.5 305" fill="none" stroke="#c9bcae" stroke-width=".65"/>
</svg>
<div class="ttl" style="top:41.4px">Возрастные особенности сердечно-</div>
<div class="ttl" style="top:68px">сосудистой системы</div>
<div class="dot" style="top:107.0px">•</div>
<div class="b" style="top:108.2px;letter-spacing:-0.1px">Сердце новорожденного отличается от сердца взрослого по форме,</div>
<div class="b" style="top:127.1px;letter-spacing:-0.04px">относительной массе и расположению. Оно имеет почти шаровидную форму,</div>
<div class="b" style="top:145.7px;letter-spacing:-0.05px">его ширина несколько больше длины. Сердце новорожденного расположено</div>
<div class="b" style="top:164.1px;letter-spacing:-0.036px">высоко из-за большой печени и поэтому высокого положения диафрагмы.</div>
<div class="dot" style="top:187.5px">•</div>
<div class="b" style="top:188.7px;letter-spacing:-0.1px">К концу первого года жизни в связи с опусканием диафрагмы и переходом</div>
<div class="b" style="top:207.5px;letter-spacing:-0.065px">ребенка к вертикальному положению сердце занимает косое положение.</div>
<div class="dot" style="top:230.3px">•</div>
<div class="b" style="top:231.5px;letter-spacing:-0.1px">К 2-3 годам его верхушка доходит до 5-го левого ребра. У 10-летних детей</div>
<div class="b" style="top:251.0px;letter-spacing:-0.19px">границы сердца почти такие же, как у взрослых.</div>
</div>
<div id="status"></div>
<svg width="666" height="406" viewBox="0 0 666 406"><g fill="none" stroke="#666" stroke-width=".5"><rect x="42.500" y="399.600" width="4.200" height="5.200"/><path d="M46.700 401.400l1.800 1.600M43.600 401.200h2M43.600 402.600h2"/></g><g fill="none" stroke="#555" stroke-width=".55"><circle cx="84.600" cy="401.600" r="2.300"/><path d="M84.600 400.400v2.600M83.300 401.200h2.600M86.200 403.400l1.800 1.600"/></g><g fill="none" stroke="#555" stroke-width=".55"><path d="M422 404.400h4M422 403h4M423 401.200l1-1.200 1 1.200"/></g><path d="M456.500 399h6.500v4h-3.800l-1.400 1.500v-1.500h-1.300z" fill="#444"/><rect x="501.400" y="396.800" width="17.900" height="9.200" fill="#c8c8c8"/><g fill="none" stroke="#666" stroke-width=".5"><rect x="507.400" y="399.200" width="6.400" height="5.400"/><path d="M509.400 399.200v5.400M509.400 402.600h4.400"/></g><g fill="none" stroke="#777" stroke-width=".5"><rect x="525.300" y="399.200" width="2.700" height="2.200"/><rect x="529.100" y="399.200" width="2.700" height="2.200"/><rect x="525.300" y="402.500" width="2.700" height="2.200"/><rect x="529.100" y="402.500" width="2.700" height="2.200"/></g><g fill="none" stroke="#777" stroke-width=".5"><rect x="544.400" y="399.200" width="5.600" height="5.400"/><path d="M547.200 399.200v5.400"/></g><g fill="none" stroke="#777" stroke-width=".5"><path d="M562.400 399.200h5.800M563 399.200v3.400h4.600v-3.400M565.300 402.600v1.400M564 404.600l1.300-.8 1.300.8"/></g><path d="M577.600 402.500h3.200" stroke="#666" stroke-width=".6"/><path d="M583.200 402.500h45.500" stroke="#777" stroke-width=".6"/><rect x="603.500" y="399.500" width="2.600" height="6" fill="#444"/><path d="M631.600 402.500h3.400M633.300 400.800v3.400" stroke="#666" stroke-width=".6"/><g fill="none" stroke="#777" stroke-width=".5"><rect x="658.200" y="399.600" width="5.600" height="5"/><path d="M659.600 402.100h2.800M661 400.800v2.600"/></g></svg>
<span class="x" style="left:7.0px;top:4.5px;font-size:5.30px;letter-spacing:-0.000px;color:#ffffff;">Файл</span>
<span class="x" style="left:34.0px;top:4.5px;font-size:5.00px;letter-spacing:0.000px;color:#b7472a;">Главная</span>
<span class="x" style="left:65.7px;top:4.5px;font-size:4.94px;letter-spacing:0.000px;color:#ffffff;">Вставка</span>
<span class="x" style="left:97.0px;top:4.5px;font-size:5.18px;letter-spacing:-0.000px;color:#ffffff;">Рисование</span>
<span class="x" style="left:135.0px;top:4.5px;font-size:5.45px;letter-spacing:-0.000px;color:#ffffff;">Конструктор</span>
<span class="x" style="left:179.0px;top:4.5px;font-size:5.55px;letter-spacing:-0.000px;color:#ffffff;">Переходы</span>
<span class="x" style="left:217.0px;top:4.5px;font-size:5.55px;letter-spacing:-0.000px;color:#ffffff;">Анимация</span>
<span class="x" style="left:255.0px;top:4.5px;font-size:5.41px;letter-spacing:0.000px;color:#ffffff;">Слайд-шоу</span>
<span class="x" style="left:295.0px;top:4.5px;font-size:5.19px;letter-spacing:0.000px;color:#ffffff;">Запись</span>
<span class="x" style="left:323.5px;top:4.5px;font-size:5.58px;letter-spacing:0.000px;color:#ffffff;">Рецензирование</span>
<span class="x" style="left:379.0px;top:4.5px;font-size:4.71px;letter-spacing:0.000px;color:#ffffff;">Вид</span>
<span class="x" style="left:400.0px;top:4.5px;font-size:5.36px;letter-spacing:-0.000px;color:#ffffff;">Справка</span>
<span class="x" style="left:433.0px;top:4.5px;font-size:5.11px;letter-spacing:0.000px;color:#ffffff;">Reverso</span>
<span class="x" style="left:477.0px;top:4.5px;font-size:5.30px;letter-spacing:0.000px;color:#ffffff;">Что вы хотите сделать?</span>
<span class="x" style="left:5.0px;top:33.8px;font-size:4.92px;letter-spacing:0.000px;color:#3a3a3a;">Вставить</span>
<span class="x" style="left:4.7px;top:50.0px;font-size:4.70px;letter-spacing:-0.088px;color:#555555;">Буфер обмена</span>
<span class="x" style="left:53.0px;top:33.8px;font-size:5.25px;letter-spacing:0.000px;color:#3a3a3a;">Создать</span>
<span class="x" style="left:53.2px;top:41.0px;font-size:5.04px;letter-spacing:0.000px;color:#3a3a3a;">слайд</span>
<span class="x" style="left:84.0px;top:18.6px;font-size:5.45px;letter-spacing:0.000px;color:#3a3a3a;">Макет</span>
<span class="x" style="left:84.0px;top:29.1px;font-size:5.28px;letter-spacing:0.000px;color:#3a3a3a;">Восстановить</span>
<span class="x" style="left:84.0px;top:39.9px;font-size:5.12px;letter-spacing:0.000px;color:#3a3a3a;">Раздел</span>
<span class="x" style="left:78.0px;top:50.0px;font-size:4.70px;letter-spacing:-0.109px;color:#555555;">Слайды</span>
<span class="x" style="left:196.3px;top:21.8px;font-size:6.03px;letter-spacing:0.000px;color:#a6a6a6;">22</span>
<span class="x" style="left:129.8px;top:35.5px;font-size:7.41px;letter-spacing:0.000px;color:#9c9c9c;font-weight:700;">Ж</span>
<span class="x" style="left:141.0px;top:35.5px;font-size:7.50px;letter-spacing:0.500px;color:#9c9c9c;font-style:italic;">К</span>
<span class="x" style="left:151.5px;top:35.5px;font-size:7.50px;letter-spacing:0.497px;color:#9c9c9c;text-decoration:underline;">Ч</span>
<span class="x" style="left:162.0px;top:35.5px;font-size:7.50px;letter-spacing:0.000px;color:#9c9c9c;font-weight:700;">S</span>
<span class="x" style="left:171.0px;top:35.8px;font-size:4.97px;letter-spacing:0.000px;color:#999;text-decoration:line-through;">abc</span>
<span class="x" style="left:182.5px;top:35.1px;font-size:5.16px;letter-spacing:-0.000px;color:#999;text-decoration:underline;">AV</span>
<span class="x" style="left:198.6px;top:35.5px;font-size:6.00px;letter-spacing:-0.019px;color:#9c9c9c;">Aa</span>
<span class="x" style="left:218.8px;top:22.1px;font-size:8.00px;letter-spacing:0.063px;color:#9c9c9c;">A</span>
<span class="x" style="left:229.8px;top:22.0px;font-size:6.90px;letter-spacing:0.000px;color:#9c9c9c;">A</span>
<span class="x" style="left:235.6px;top:35.3px;font-size:7.65px;letter-spacing:0.000px;color:#9c9c9c;">A</span>
<span class="x" style="left:177.5px;top:50.0px;font-size:4.70px;letter-spacing:-0.087px;color:#555555;">Шрифт</span>
<span class="x" style="left:290.7px;top:50.0px;font-size:4.93px;letter-spacing:0.000px;color:#555555;">Абзац</span>
<span class="x" style="left:419.2px;top:33.8px;font-size:5.51px;letter-spacing:0.000px;color:#3a3a3a;">Упорядочить</span>
<span class="x" style="left:454.6px;top:33.8px;font-size:5.25px;letter-spacing:-0.000px;color:#a6a6a6;">Экспресс-</span>
<span class="x" style="left:458.2px;top:41.0px;font-size:4.79px;letter-spacing:-0.000px;color:#a6a6a6;">стили</span>
<span class="x" style="left:490.7px;top:18.1px;font-size:5.29px;letter-spacing:0.000px;color:#a6a6a6;">Заливка фигуры</span>
<span class="x" style="left:490.7px;top:28.6px;font-size:5.48px;letter-spacing:0.000px;color:#a6a6a6;">Контур фигуры</span>
<span class="x" style="left:490.7px;top:39.4px;font-size:5.14px;letter-spacing:0.000px;color:#a6a6a6;">Эффекты фигуры</span>
<span class="x" style="left:431.8px;top:50.0px;font-size:4.70px;letter-spacing:-0.046px;color:#555555;">Рисование</span>
<span class="x" style="left:559.2px;top:18.0px;font-size:5.16px;letter-spacing:0.000px;color:#3a3a3a;">Найти</span>
<span class="x" style="left:559.2px;top:28.6px;font-size:5.22px;letter-spacing:0.000px;color:#3a3a3a;">Заменить</span>
<span class="x" style="left:559.2px;top:39.4px;font-size:5.08px;letter-spacing:0.000px;color:#3a3a3a;">Выделить</span>
<span class="x" style="left:553.0px;top:50.0px;font-size:4.74px;letter-spacing:0.000px;color:#555555;">Редактирование</span>
<span class="x" style="left:601.0px;top:33.6px;font-size:5.44px;letter-spacing:0.000px;color:#3a3a3a;">Correct</span>
<span class="x" style="left:621.0px;top:33.6px;font-size:5.09px;letter-spacing:0.000px;color:#3a3a3a;">Rephraser</span>
<span class="x" style="left:614.4px;top:50.0px;font-size:4.71px;letter-spacing:0.000px;color:#555555;">Reverso</span>
<span class="x" style="left:3.0px;top:398.8px;font-size:4.76px;letter-spacing:-0.000px;color:#444444;">Слайд 2 из 13</span>
<span class="x" style="left:56.7px;top:398.8px;font-size:4.83px;letter-spacing:0.000px;color:#444444;">русский</span>
<span class="x" style="left:89.3px;top:398.8px;font-size:4.81px;letter-spacing:0.000px;color:#444444;">Специальные возможности: проверьте рекомендации</span>
<span class="x" style="left:429.5px;top:398.8px;font-size:4.77px;letter-spacing:0.000px;color:#444444;">Заметки</span>
<span class="x" style="left:464.7px;top:398.8px;font-size:4.74px;letter-spacing:0.000px;color:#444444;">Примечания</span>
<span class="x" style="left:640.4px;top:398.8px;font-size:4.70px;letter-spacing:-0.073px;color:#444444;">92 %</span>
<span class="x" style="left:5.4px;top:64.7px;font-size:8.00px;letter-spacing:-0.247px;color:#5a5a5a;">1</span>
<span class="x" style="left:5.4px;top:111.7px;font-size:8.00px;letter-spacing:-0.247px;color:#c43e1c;">2</span>
<span class="x" style="left:5.4px;top:158.6px;font-size:8.00px;letter-spacing:-0.247px;color:#5a5a5a;">3</span>
<span class="x" style="left:5.4px;top:205.6px;font-size:8.00px;letter-spacing:-0.247px;color:#5a5a5a;">4</span>
<span class="x" style="left:5.4px;top:252.5px;font-size:8.00px;letter-spacing:-0.247px;color:#5a5a5a;">5</span>
<span class="x" style="left:5.4px;top:299.4px;font-size:8.00px;letter-spacing:-0.247px;color:#5a5a5a;">6</span>
<span class="x" style="left:5.4px;top:346.4px;font-size:8.00px;letter-spacing:-0.247px;color:#5a5a5a;">7</span>
</div>
</body></html>
